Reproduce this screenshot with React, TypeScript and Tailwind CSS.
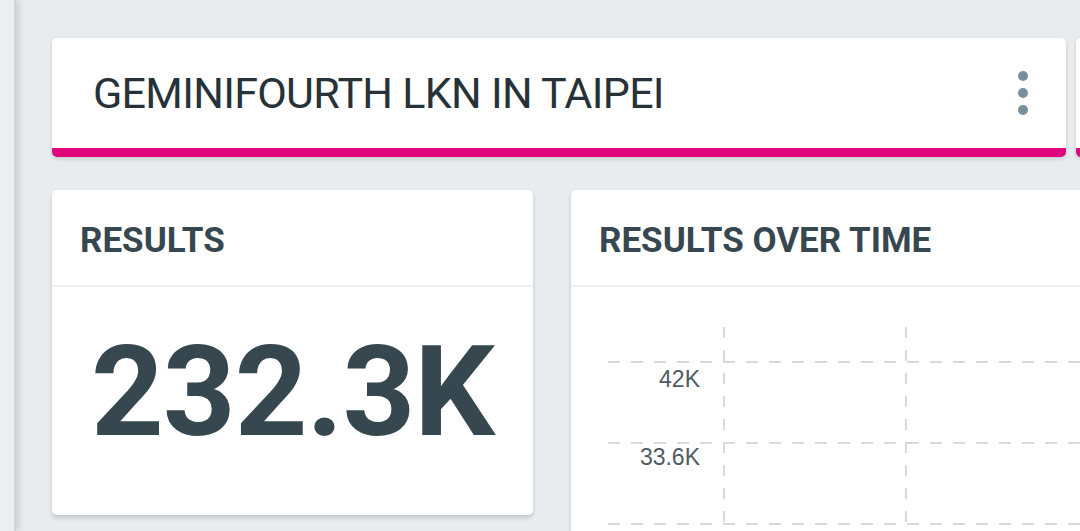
const GRID = '#d9d9d9'

function KebabIcon() {
  return (
    <div className="flex flex-col gap-[7px]">
      <span className="block w-[10px] h-[10px] rounded-full bg-[#78909c]" />
      <span className="block w-[10px] h-[10px] rounded-full bg-[#78909c]" />
      <span className="block w-[10px] h-[10px] rounded-full bg-[#78909c]" />
    </div>
  )
}

function ResultsChart() {
  const rows = [75, 156, 237]
  const cols = [153, 335, 517]
  return (
    <svg width="620" height="260" className="block">
      {rows.map((y) => (
        <line key={y} x1="37" x2="620" y1={y} y2={y} stroke={GRID} strokeWidth="2" strokeDasharray="12 11" />
      ))}
      {cols.map((x) => (
        <line key={x} x1={x} x2={x} y1="40" y2="260" stroke={GRID} strokeWidth="2" strokeDasharray="11 12" />
      ))}
      <text x="129" y="100" textAnchor="end" fontSize="23" fill="#4f5b62" fontFamily="'Liberation Sans', Arial, sans-serif">42K</text>
      <text x="129" y="178" textAnchor="end" fontSize="23" fill="#4f5b62" fontFamily="'Liberation Sans', Arial, sans-serif">33.6K</text>
    </svg>
  )
}

function Card({ title, children, className }: { title: string, children: React.ReactNode, className: string }) {
  return (
    <div className={`bg-white rounded-[5px] shadow-[0_3px_4px_rgba(0,0,0,0.16)] shrink-0 flex flex-col overflow-hidden ${className}`}>
      <div className="h-[97px] flex items-center pl-[28px] pt-[5px] border-b-2 border-[#eef0f2]">
        <h2 className="text-[35px] font-bold text-[#37474f] leading-none">{title}</h2>
      </div>
      {children}
    </div>
  )
}

export default function App() {
  return (
    <div className="w-[1080px] h-[531px] overflow-hidden bg-[#e9ecef] flex font-['Roboto',sans-serif]">
      {/* side rail */}
      <div className="w-[16px] shrink-0 bg-[#eceef0] border-r-2 border-[#d3d6d9] shadow-[3px_0_6px_rgba(0,0,0,0.12)] z-10" />

      <div className="flex-1 pl-[36px] pt-[38px] flex flex-col gap-[33px] min-w-0">
        <div className="flex gap-[10px]">
          <div className="w-[1014px] h-[119px] shrink-0 bg-white rounded-[5px] border-b-[9px] border-[#e0067b] shadow-[0_2px_4px_rgba(0,0,0,0.14)] flex items-center justify-between pl-[41px] pr-[38px]">
            <h1 className="text-[43px] text-[#263238] leading-none tracking-[-0.7px]">GEMINIFOURTH LKN IN TAIPEI</h1>
            <KebabIcon />
          </div>
          <div className="w-[300px] h-[119px] shrink-0 bg-white rounded-[5px] border-b-[9px] border-[#e0067b] shadow-[0_2px_4px_rgba(0,0,0,0.14)]" />
        </div>

        <div className="flex gap-[38px]">
          <Card title="RESULTS" className="w-[481px] h-[325px]">
            <div className="flex-1 flex items-center justify-center pb-[20px]">
              <span className="text-[127px] font-bold text-[#37474f] leading-none tracking-[-1px]">232.3K</span>
            </div>
          </Card>
          <Card title="RESULTS OVER TIME" className="w-[620px] h-[400px]">
            <ResultsChart />
          </Card>
        </div>
      </div>
    </div>
  )
}
